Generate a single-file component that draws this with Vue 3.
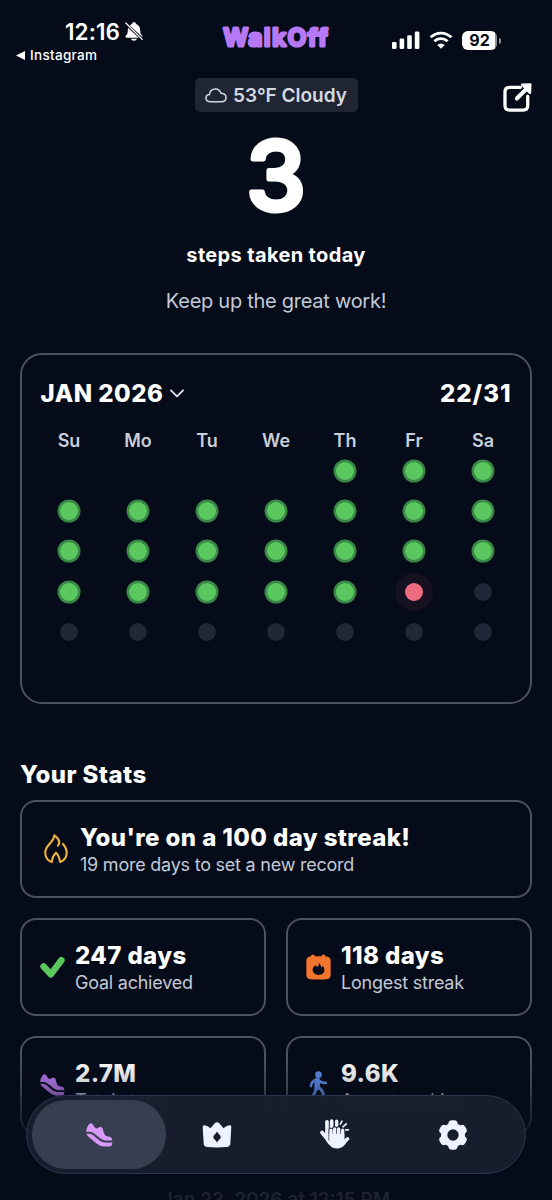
<template>
  <div class="screen">
    <header class="status-bar">
      <div class="status-left">
        <div class="clock">
          <span>12:16</span>
          <svg class="bell" viewBox="0 0 54 58">
            <path fill="currentColor" d="M27 1c4 0 6 2 6 5 9 3 13 10 13 20 0 9 2 12 6 16 2 3 1 6-3 6H5c-4 0-5-3-3-6 4-4 6-7 6-16 0-10 4-17 13-20 0-3 2-5 6-5zM18 51h18c-1 4-4 6-9 6s-8-2-9-6z" />
            <path d="M0 3l53 50" stroke="#050b18" stroke-width="9" />
            <path d="M2 3l50 50" stroke="currentColor" stroke-width="4" stroke-linecap="round" />
          </svg>
        </div>
        <div class="back-app">
          <svg viewBox="0 0 9 9"><path d="M0 4.5L9 0v9z" fill="currentColor" /></svg>
          <span>Instagram</span>
        </div>
      </div>

      <svg class="logo" viewBox="0 0 112 34">
        <text x="3.5" y="25" textLength="104" lengthAdjust="spacing">WalkOff</text>
      </svg>

      <div class="status-right">
        <svg class="signal" viewBox="0 0 28 18">
          <rect x="0" y="11" width="4.6" height="7" rx="1.3" />
          <rect x="7.6" y="7.6" width="4.6" height="10.4" rx="1.3" />
          <rect x="15.2" y="4.2" width="4.6" height="13.8" rx="1.3" />
          <rect x="22.8" y="0.6" width="4.6" height="17.4" rx="1.3" />
        </svg>
        <svg class="wifi" viewBox="0 0 24 18">
          <path d="M1.6 6.3a14.8 14.8 0 0 1 20.8 0M5.4 10.3a9.4 9.4 0 0 1 13.2 0" />
          <path class="wifi-dot" d="M12 17.8l-3.7-3.9a5.3 5.3 0 0 1 7.4 0z" />
        </svg>
        <div class="battery"><span>92</span></div>
      </div>
    </header>

    <div class="top-row">
      <div class="weather">
        <svg viewBox="0 0 22 15">
          <path d="M5.4 13.8C2.8 13.8 1 12.4 1 10.1 1 8.2 2.5 6.8 4.4 6.6 4.9 3.2 7.3 1 10.3 1c2.8 0 4.9 1.6 5.7 4.2 3 .1 5 1.8 5 4.3 0 2.6-1.9 4.3-4.6 4.3z" />
        </svg>
        <span>53°F Cloudy</span>
      </div>
      <button class="share" title="Share">
        <svg viewBox="0 0 88 88">
          <path d="M53 13H20Q6 13 6 27V68Q6 82 20 82H61Q75 82 75 68V40" fill="none" stroke="currentColor" stroke-width="10" stroke-linecap="round" />
          <path d="M42 47L70 19" stroke="currentColor" stroke-width="12" stroke-linecap="round" />
          <path d="M58 5L83 4 82 30z" fill="currentColor" stroke="currentColor" stroke-width="7" stroke-linejoin="round" />
        </svg>
      </button>
    </div>

    <section class="hero">
      <svg class="step-count" viewBox="0 0 80 84">
        <text x="40" y="74" text-anchor="middle">3</text>
      </svg>
      <h1>steps taken today</h1>
      <p>Keep up the great work!</p>
    </section>

    <section class="calendar">
      <div class="calendar-head">
        <div class="month">
          <span>JAN 2026</span>
          <svg viewBox="0 0 14 9"><path d="M1 1.3l6 6 6-6" /></svg>
        </div>
        <span class="score">22/31</span>
      </div>
      <div class="weekdays">
        <span v-for="day in weekdays" :key="day">{{ day }}</span>
      </div>
      <div class="days">
        <div v-for="(state, i) in days" :key="i" class="day">
          <span v-if="state" class="dot" :class="state"></span>
        </div>
      </div>
    </section>

    <h2>Your Stats</h2>

    <section class="stats">
      <div v-for="stat in stats" :key="stat.icon" class="stat" :class="{ wide: stat.icon === 'flame' }">
        <svg v-if="stat.icon === 'flame'" class="flame" viewBox="0 0 72 90">
          <path d="M31 4C30 18 18 27 10 38C-2 55 4 78 24 84C24 70 27 65 36 56C44 64 47 71 48 84C70 77 75 50 57 30M31 4C44 12 50 25 42 35" />
        </svg>
        <svg v-else-if="stat.icon === 'check'" class="check" viewBox="0 0 76 70">
          <path d="M11 32L33 56 65 13" fill="none" stroke="#5ac85f" stroke-width="20" stroke-linecap="round" stroke-linejoin="round" />
        </svg>
        <svg v-else-if="stat.icon === 'calendar'" class="cal-icon" viewBox="0 0 76 78">
          <path fill="#f1752d" fill-rule="evenodd" d="M15 6Q15 1 21 1Q27 1 27 6H47Q47 1 53 1Q59 1 59 6Q75 7 75 20L75 63Q75 74 63 76Q38 78 13 76Q1 75 1 62L1 20Q1 7 15 6ZM39 27C39 35 38 37 34 38Q31 38 29 34C22 38 20 43 20 48C21 57 28 63 38 63C49 63 56 57 56 48Q56 41 51 36Q49 40 46 39C45 34 43 30 39 27Z" />
        </svg>
        <svg v-else-if="stat.icon === 'shoe'" class="shoe" viewBox="0 0 82 72">
          <path :d="shoePath" fill="#b577e6" />
        </svg>
        <svg v-else class="walker" viewBox="0 0 56 88">
          <circle cx="28" cy="11" r="10" />
          <path d="M24 28L24 50" stroke-width="17" />
          <path d="M22 27Q6 30 5 46M29 28Q35 37 50 36" stroke-width="8" />
          <path d="M21 50Q20 64 9 79M29 50Q43 60 44 79" stroke-width="9" />
        </svg>
        <div class="stat-text">
          <strong>{{ stat.value }}</strong>
          <span>{{ stat.label }}</span>
        </div>
      </div>
    </section>

    <p class="updated">Jan 23, 2026 at 12:15 PM</p>

    <div class="fade"></div>

    <nav class="tab-bar">
      <button class="tab active" title="Steps">
        <svg class="tab-shoe" viewBox="0 0 82 72"><path :d="shoePath" fill="#d79af8" /></svg>
      </button>
      <button class="tab" title="Challenges">
        <svg class="tab-crown" viewBox="0 0 90 80">
          <path fill="currentColor" fill-rule="evenodd" d="M1 15Q0 9 7 10Q17 11 25 19L38 4Q45-3 52 4L65 19Q73 11 83 10Q90 9 89 15L86 66Q86 75 76 77Q45 80 14 77Q4 75 4 66ZM45 29Q42 35 37 39Q30 46 37 53Q42 57 45 63Q48 57 53 53Q60 46 53 39Q48 35 45 29Z" />
        </svg>
      </button>
      <button class="tab" title="High fives">
        <svg class="tab-clap" viewBox="0 0 90 92">
          <g fill="none" stroke="currentColor" stroke-linecap="round">
            <path d="M21 8V50M35 6V40M6 40L22 60" stroke-width="11" />
            <path d="M50 6V20" stroke-width="10" />
            <path d="M61 15L66 6M69 23L79 14M75 32H85" stroke-width="5" />
          </g>
          <path fill="currentColor" d="M16 42H35V82Q25 78 18 65z" />
          <g stroke-linecap="round" stroke-linejoin="round">
            <path d="M33 33V60M44 29V60M56 29V60M68 33V60M82 59L67 74" fill="none" stroke="#191f2f" stroke-width="15" />
            <path d="M28 44H73V60Q86 54 88 58L75 76Q66 88 50 88Q28 88 28 68z" fill="currentColor" />
            <path d="M33 33V62M44 29V60M56 29V60M68 33V64M83 59L67 74" fill="none" stroke="currentColor" stroke-width="10" />
          </g>
        </svg>
      </button>
      <button class="tab" title="Settings">
        <svg class="tab-gear" viewBox="-45 -45 90 90">
          <mask id="gear-hole">
            <rect x="-45" y="-45" width="90" height="90" fill="#fff" />
            <circle r="17" fill="#000" />
          </mask>
          <g mask="url(#gear-hole)" fill="currentColor">
            <circle r="36" />
            <rect v-for="angle in [0, 60, 120]" :key="angle" x="-14" y="-44" width="28" height="88" rx="11" :transform="`rotate(${angle})`" />
          </g>
        </svg>
      </button>
    </nav>
  </div>
</template>

<script setup>
const weekdays = ['Su', 'Mo', 'Tu', 'We', 'Th', 'Fr', 'Sa']

// January 2026 starts on a Thursday, today is the 23rd
const today = 23
const days = [
  ...Array(4).fill(null),
  ...Array.from({ length: 31 }, (_, i) => {
    if (i + 1 < today) return 'done'
    return i + 1 === today ? 'today' : 'upcoming'
  })
]

const stats = [
  { icon: 'flame', value: "You're on a 100 day streak!", label: '19 more days to set a new record' },
  { icon: 'check', value: '247 days', label: 'Goal achieved' },
  { icon: 'calendar', value: '118 days', label: 'Longest streak' },
  { icon: 'shoe', value: '2.7M', label: 'Total steps' },
  { icon: 'walker', value: '9.6K', label: 'Avg. steps/day' }
]

const shoePath =
  'M2 17Q6 4 13 1Q19-1 22 6Q25 15 31 16Q38 14 42 12Q49 10 51 17Q54 31 58 37Q62 41 74 42Q80 44 80 53L58 53Q50 52 44 47L26 32Q18 25 8 26L1 26Q0 21 2 17Z' +
  'M1 32H8Q16 31 22 37L40 52Q49 59 58 59H80Q80 71 70 71H56Q44 71 34 63L12 45Q3 38 1 32Z'
</script>

<style>
body {
  background: #050b18;
}
</style>

<style scoped>
.screen {
  position: relative;
  width: 552px;
  height: 1200px;
  overflow: hidden;
  box-sizing: border-box;
  background: #050b18;
  color: #fff;
  font-family: Inter, 'Liberation Sans', sans-serif;
}

svg {
  display: block;
  flex-shrink: 0;
  overflow: visible;
}

button {
  padding: 0;
  border: 0;
  background: none;
  color: inherit;
}

h1,
h2,
p {
  margin: 0;
}

.status-bar {
  display: grid;
  grid-template-columns: 220px 112px 1fr;
  height: 78px;
}

.status-left {
  padding: 18px 0 0 16px;
}

.clock {
  display: flex;
  align-items: center;
  gap: 5px;
  height: 27px;
  padding-left: 49px;
  font-size: 22.5px;
  font-weight: 600;
  letter-spacing: 0.1px;
}

.bell {
  width: 18px;
  height: 19px;
}

.back-app {
  display: flex;
  align-items: center;
  gap: 5px;
  height: 20px;
  font-size: 13.5px;
  font-weight: 500;
  letter-spacing: 0.3px;
}

.back-app svg {
  width: 9px;
  height: 9px;
}

.logo {
  width: 112px;
  height: 34px;
  margin-top: 21px;
}

.logo text {
  fill: #b678f5;
  stroke: #b678f5;
  stroke-width: 3.2px;
  stroke-linejoin: round;
  font-size: 24px;
  font-weight: 600;
}

.status-right {
  display: flex;
  align-items: center;
  height: 20px;
  margin-top: 30px;
  padding-left: 60px;
}

.signal {
  width: 28px;
  height: 18px;
  margin-right: 9px;
  fill: #fff;
}

.wifi {
  width: 24px;
  height: 18px;
  margin-right: 9px;
  fill: none;
  stroke: #fff;
  stroke-width: 2.8;
}

.wifi .wifi-dot {
  fill: #fff;
  stroke: none;
}

.battery {
  position: relative;
  width: 35px;
  height: 19px;
  border-radius: 6px;
  background: linear-gradient(to right, #fff 33px, #8b8f98 33px);
  color: #050b18;
  font-size: 16px;
  font-weight: 700;
  line-height: 19px;
  text-align: center;
}

.battery::after {
  content: '';
  position: absolute;
  top: 7px;
  right: -4px;
  width: 2px;
  height: 6px;
  border-radius: 0 2px 2px 0;
  background: #8b8f98;
}

.top-row {
  display: grid;
  grid-template-columns: 1fr 163px 1fr;
  height: 34px;
}

.weather {
  grid-column: 2;
  display: flex;
  align-items: center;
  justify-content: center;
  gap: 6px;
  height: 34px;
  border-radius: 5px;
  background: #1f2533;
  color: #d5d9e2;
  font-size: 19px;
  font-weight: 600;
  white-space: nowrap;
}

.weather svg {
  width: 22px;
  height: 15px;
  fill: none;
  stroke: currentColor;
  stroke-width: 1.5;
}

.share {
  justify-self: end;
  margin: 5px 20px 0 0;
  height: 29px;
}

.share svg {
  width: 29px;
  height: 29px;
}

.hero {
  display: flex;
  flex-direction: column;
  align-items: center;
  height: 241px;
  padding-top: 24px;
  box-sizing: border-box;
}

.step-count {
  width: 80px;
  height: 84px;
}

.step-count text {
  fill: #fff;
  stroke: #fff;
  stroke-width: 5px;
  stroke-linejoin: round;
  font-size: 95px;
  font-weight: 500;
}

.hero h1 {
  margin-top: 22px;
  font-size: 20px;
  font-weight: 700;
  line-height: 26px;
  letter-spacing: 0.35px;
}

.hero p {
  margin-top: 20px;
  color: #c3c9d6;
  font-size: 20px;
  line-height: 26px;
  letter-spacing: -0.27px;
}

.calendar {
  height: 351px;
  margin: 0 20px;
  padding: 23px 12.5px 0;
  box-sizing: border-box;
  border: 2px solid #4b515f;
  border-radius: 22px;
}

.calendar-head {
  display: flex;
  align-items: center;
  justify-content: space-between;
  height: 30px;
  padding: 0 6px;
  font-size: 24px;
  font-weight: 800;
  letter-spacing: 0.5px;
}

.calendar-head .score {
  letter-spacing: 1px;
}

.month {
  display: flex;
  align-items: center;
  gap: 7px;
}

.month svg {
  width: 14px;
  height: 9px;
  fill: none;
  stroke: #e4e7ee;
  stroke-width: 1.8;
  stroke-linecap: round;
  stroke-linejoin: round;
}

.weekdays,
.days {
  display: grid;
  grid-template-columns: repeat(7, 1fr);
}

.weekdays {
  margin-top: 20px;
  color: #c9cedb;
  font-size: 18px;
  font-weight: 600;
  line-height: 25px;
  text-align: center;
}

.days {
  margin-top: -2px;
  grid-auto-rows: 40.2px;
}

.day {
  display: flex;
  align-items: center;
  justify-content: center;
}

.dot {
  width: 18px;
  height: 18px;
  border-radius: 50%;
}

.dot.done {
  background: #5ac85f;
  box-shadow: 0 0 0 2.5px #3a8747;
}

.dot.today {
  background: #ef6b80;
  box-shadow: 0 0 0 10px #161120;
}

.dot.upcoming {
  background: #212736;
}

h2 {
  margin: 56px 0 0 20px;
  font-size: 24px;
  font-weight: 800;
  line-height: 30px;
  letter-spacing: 0.4px;
}

.stats {
  display: grid;
  grid-template-columns: 1fr 1fr;
  grid-auto-rows: 98px;
  gap: 20px;
  margin: 10px 20px 0;
}

.stat {
  display: flex;
  align-items: center;
  gap: 10px;
  padding: 0 18px;
  box-sizing: border-box;
  border: 2px solid #4b515f;
  border-radius: 16px;
}

.stat.wide {
  grid-column: span 2;
  gap: 11px;
  padding-left: 21px;
}

.stat-text {
  display: flex;
  flex-direction: column;
  padding-top: 4px;
  white-space: nowrap;
}

.stat-text strong {
  font-size: 24px;
  font-weight: 800;
  line-height: 28px;
  letter-spacing: 0.4px;
}

.stat-text span {
  color: #c3c9d6;
  font-size: 18px;
  line-height: 26px;
  letter-spacing: -0.23px;
}

.flame {
  width: 26px;
  height: 30px;
  fill: none;
  stroke: #e9b03a;
  stroke-width: 6.5;
  stroke-linecap: round;
  stroke-linejoin: round;
}

.check {
  width: 25px;
  height: 23px;
}

.cal-icon {
  width: 25px;
  height: 26px;
}

.shoe {
  width: 25px;
  height: 22px;
}

.walker {
  width: 19px;
  height: 29px;
  margin: 0 3px;
  fill: #5b8ce6;
  stroke: none;
}

.walker path {
  fill: none;
  stroke: #5b8ce6;
  stroke-linecap: round;
}

.updated {
  margin-top: 54px;
  color: #a0a5b2;
  font-size: 19px;
  font-weight: 600;
  line-height: 24px;
  text-align: center;
}

.fade {
  position: absolute;
  inset: 1056px 0 0;
  background: linear-gradient(to bottom, rgba(5, 11, 24, 0), rgba(5, 11, 24, 0.18) 28px, rgba(5, 11, 24, 0.45) 44px, rgba(5, 11, 24, 0.8) 80px, rgba(5, 11, 24, 0.85));
}

.tab-bar {
  position: absolute;
  left: 26px;
  bottom: 26px;
  display: flex;
  width: 500px;
  height: 79px;
  padding: 4px 13px;
  box-sizing: border-box;
  border: 1px solid #2b3450;
  border-radius: 40px;
  background: rgba(25, 31, 47, 0.94);
  backdrop-filter: blur(3px);
}

.tab {
  display: flex;
  flex: 0 0 118px;
  align-items: center;
  justify-content: center;
  color: #edf3ff;
}

.tab.active {
  flex-basis: 134px;
  margin: 0 -8px;
  border-radius: 34px;
  background: #373e4f;
}

.tab-shoe {
  width: 27px;
  height: 24px;
}

.tab-crown {
  width: 30px;
  height: 26px;
}

.tab-clap {
  width: 30px;
  height: 31px;
}

.tab-gear {
  width: 30px;
  height: 30px;
}
</style>
